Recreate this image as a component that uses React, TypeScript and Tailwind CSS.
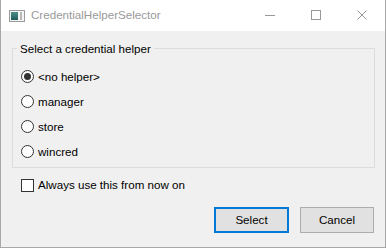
import { useState } from "react";

// Small Win10-style dialog that asks which git credential helper to use.
const helpers = ["<no helper>", "manager", "store", "wincred"];

const font = { fontFamily: '"Liberation Sans", Arial, sans-serif' };

function AppIcon() {
  return (
    <svg width="16" height="12" viewBox="0 0 16 12" className="shrink-0">
      <defs>
        <linearGradient id="g" x1="0" y1="0" x2="0" y2="1">
          <stop offset="0" stopColor="#4d8f86" />
          <stop offset="1" stopColor="#1f5a5a" />
        </linearGradient>
      </defs>
      <rect x="0.5" y="0.5" width="15" height="11" fill="#f4f4f4" stroke="#9a9a9a" />
      <rect x="2" y="2" width="7" height="8" fill="url(#g)" />
      <rect x="11" y="2" width="2" height="8" fill="#b8b8b8" />
    </svg>
  );
}

function CaptionButtons() {
  return (
    <div className="ml-auto flex h-full">
      <div className="flex h-full w-[46px] items-center justify-center">
        <svg width="10" height="10" viewBox="0 0 10 10">
          <line x1="0" y1="5.5" x2="10" y2="5.5" stroke="#999" strokeWidth="1" />
        </svg>
      </div>
      <div className="flex h-full w-[46px] items-center justify-center">
        <svg width="10" height="10" viewBox="0 0 10 10">
          <rect x="0.5" y="0.5" width="9" height="9" fill="none" stroke="#999" strokeWidth="1" />
        </svg>
      </div>
      <div className="flex h-full w-[46px] items-center justify-center">
        <svg width="10" height="10" viewBox="0 0 10 10">
          <path d="M0.5 0.5 L9.5 9.5 M9.5 0.5 L0.5 9.5" stroke="#999" strokeWidth="1" />
        </svg>
      </div>
    </div>
  );
}

export default function App() {
  const [selected, setSelected] = useState(0);
  const [always, setAlways] = useState(false);

  return (
    <div
      className="flex h-[248px] w-[386px] flex-col border-x border-b border-[#a8a8a8] bg-[#f0f0f0] text-[11.6px] text-black"
      style={font}
    >
      <div className="flex h-[31px] shrink-0 items-center bg-white pb-px">
        <div className="ml-[8px] mt-px">
          <AppIcon />
        </div>
        <span className="ml-[6px] text-[#999]">CredentialHelperSelector</span>
        <CaptionButtons />
      </div>

      <div className="flex flex-col px-[11px] pt-[10px]">
        <fieldset className="mr-[-1px] border border-[#dcdcdc] pb-[3px] pl-[8px] pt-[8px]">
          <legend className="-ml-[4px] px-[3px] leading-[15px]">Select a credential helper</legend>
          {helpers.map((h, i) => (
            <div
              key={h}
              className="flex h-[25px] cursor-default items-center"
              onClick={() => setSelected(i)}
            >
              <span className="flex h-[13px] w-[13px] items-center justify-center rounded-full border border-[#333] bg-white">
                {selected === i && <span className="h-[7px] w-[7px] rounded-full bg-[#333]" />}
              </span>
              <span className="ml-[4px]">{h}</span>
            </div>
          ))}
        </fieldset>

        <div className="mt-[7px] flex h-[20px] items-center pl-[9px]" onClick={() => setAlways(!always)}>
          <span className="flex h-[13px] w-[13px] items-center justify-center border border-[#333] bg-white">
            {always && (
              <svg width="9" height="9" viewBox="0 0 9 9">
                <path d="M1 4.5 L3.5 7 L8 1.5" fill="none" stroke="#333" strokeWidth="1.3" />
              </svg>
            )}
          </span>
          <span className="ml-[4px]">Always use this from now on</span>
        </div>

        <div className="mt-[12px] flex justify-end gap-[11px]">
          <button className="h-[26px] w-[75px] border-2 border-[#0078d7] bg-[#e1e1e1]">Select</button>
          <button className="h-[26px] w-[74px] border border-[#adadad] bg-[#e1e1e1]">Cancel</button>
        </div>
      </div>
    </div>
  );
}
